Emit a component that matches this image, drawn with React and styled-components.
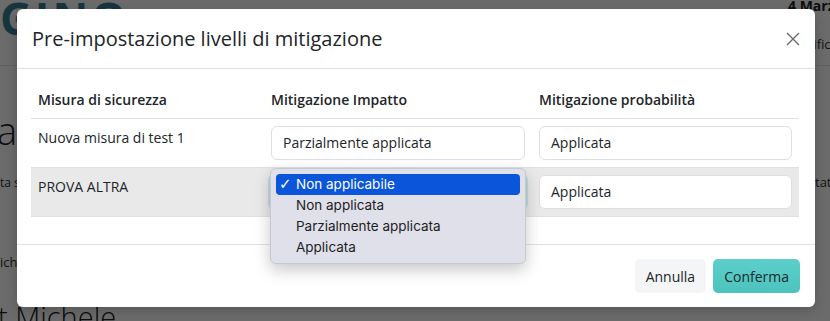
import React from 'react';
import styled, { createGlobalStyle } from 'styled-components';

const GlobalStyle = createGlobalStyle`
  html, body {
    margin: 0;
    padding: 0;
    overflow: hidden;
    background: #ffffff;
  }
  * {
    box-sizing: border-box;
  }
`;

// Pagina sotto la modale
const Screen = styled.div`
  position: relative;
  width: 830px;
  height: 321px;
  overflow: hidden;
  font-family: 'Open Sans', sans-serif;
  color: #222;
`;

const TopBar = styled.header`
  display: flex;
  justify-content: space-between;
  height: 66px;
  border-bottom: 1px solid #e4e4e4;
`;

const Logo = styled.div`
  font-size: 44px;
  font-weight: 700;
  line-height: 1;
  letter-spacing: 3px;
  color: #3b8296;
  margin-top: -4px;
`;

const DateBox = styled.div`
  width: 42px;
  overflow: hidden;
  white-space: nowrap;
`;

const DateText = styled.div`
  font-size: 14px;
  font-weight: 700;
  line-height: 16px;
  margin-top: -2px;
`;

const DateSub = styled.div`
  font-size: 13px;
  line-height: 18px;
  margin-top: 21px;
  margin-left: 5px;
  color: #333;
`;

const PageBody = styled.main`
  display: flex;
  justify-content: space-between;
`;

const LeftGutter = styled.div`
  display: flex;
  flex-direction: column;
  width: 17px;
  white-space: nowrap;
`;

const RightGutter = styled.div`
  width: 15px;
  overflow: hidden;
  white-space: nowrap;
`;

const BigWord = styled.div`
  font-size: 38px;
  font-weight: 300;
  line-height: 44px;
  margin-top: 42px;
  margin-left: -3px;
`;

const SmallLine = styled.div`
  font-size: ${(p) => p.$size || 12}px;
  line-height: 18px;
  margin-top: ${(p) => p.$top || 0}px;
  color: #333;
`;

const BigName = styled.div`
  font-size: 29px;
  font-weight: 300;
  line-height: 40px;
  margin-top: 26px;
  margin-left: -2px;
`;

const Overlay = styled.div`
  position: absolute;
  inset: 0;
  background: rgba(0, 0, 0, 0.58);
`;

// Modale
const Modal = styled.div`
  position: absolute;
  left: 17px;
  top: 9px;
  width: 798px;
  background: #ffffff;
  border-radius: 6px;
  box-shadow: 0 3px 12px rgba(0, 0, 0, 0.2);
  font-family: 'Open Sans', sans-serif;
  color: #212529;
`;

const ModalHeader = styled.div`
  display: flex;
  align-items: center;
  justify-content: space-between;
  padding: 15px 15px 14px;
  border-bottom: 1px solid #dee2e6;
`;

const ModalTitle = styled.h5`
  margin: 0;
  font-size: 20px;
  font-weight: 400;
  line-height: 30px;
`;

const CloseButton = styled.button`
  display: flex;
  width: 14px;
  height: 14px;
  padding: 0;
  border: none;
  background: transparent;
  cursor: pointer;
`;

const ModalBody = styled.div`
  padding: 13px 16px 27px 14px;
`;

const Table = styled.table`
  width: 100%;
  border-collapse: collapse;
  table-layout: fixed;
  font-size: 14px;
  line-height: 24px;
`;

const Th = styled.th`
  width: ${(p) => p.$w}px;
  padding: 6px 7px;
  text-align: left;
  font-weight: 600;
  border-bottom: 1px solid #dee2e6;
`;

const Tr = styled.tr`
  background: ${(p) => (p.$shaded ? '#e9e9e9' : 'transparent')};
`;

const Td = styled.td`
  position: relative;
  padding: 7px;
  vertical-align: top;
  border-top: 1px solid #dee2e6;
  border-bottom: 1px solid #dee2e6;
`;

const Field = styled.div`
  display: flex;
  align-items: center;
  height: 34px;
  padding: 0 11px;
  background: #ffffff;
  border: 1px solid ${(p) => (p.$focused ? '#86d5d0' : '#dcdfe4')};
  border-radius: 6px;
  box-shadow: ${(p) => (p.$focused ? '0 0 0 3px rgba(86, 200, 196, 0.3)' : 'none')};
  font-size: 14px;
  white-space: nowrap;
`;

const Menu = styled.ul`
  position: absolute;
  top: 0;
  left: 6px;
  width: 256px;
  margin: 0;
  padding: 5px;
  list-style: none;
  background: #dfe0e9;
  border: 1px solid #c7c9d1;
  border-radius: 6px;
  box-shadow: 0 6px 16px rgba(0, 0, 0, 0.22);
  font-family: Inter, 'Liberation Sans', sans-serif;
  font-size: 13.5px;
  z-index: 2;
`;

const MenuItem = styled.li`
  position: relative;
  height: 21px;
  line-height: 21px;
  padding-left: 20px;
  border-radius: 4px;
  color: ${(p) => (p.$active ? '#ffffff' : '#1d1d1f')};
  background: ${(p) => (p.$active ? '#0a55d9' : 'transparent')};
`;

const Check = styled.span`
  position: absolute;
  left: 3px;
  top: 0;
  font-family: 'DejaVu Sans', sans-serif;
  font-size: 15px;
  font-weight: 700;
`;

const ModalFooter = styled.div`
  display: flex;
  justify-content: flex-end;
  gap: 7px;
  padding: 14px 15px;
  border-top: 1px solid #dee2e6;
`;

const Button = styled.button`
  height: 34px;
  padding: 0 11px;
  border: none;
  border-radius: 5px;
  font-family: 'Open Sans', sans-serif;
  font-size: 14px;
  color: ${(p) => (p.$primary ? '#1b2a2a' : '#212529')};
  background: ${(p) => (p.$primary ? 'linear-gradient(#5dcfca, #4dc3be)' : '#f4f5f7')};
  cursor: pointer;
`;

const opzioni = ['Non applicabile', 'Non applicata', 'Parzialmente applicata', 'Applicata'];

const misure = [
  { id: 1, nome: 'Nuova misura di test 1', impatto: 'Parzialmente applicata', probabilita: 'Applicata' },
  { id: 2, nome: 'PROVA ALTRA', impatto: 'Non applicabile', probabilita: 'Applicata', aperto: true },
];

function App() {
  return (
    <Screen>
      <GlobalStyle />
      <TopBar>
        <Logo>GINO</Logo>
        <DateBox>
          <DateText>4 Marzo</DateText>
          <DateSub>Verifica</DateSub>
        </DateBox>
      </TopBar>
      <PageBody>
        <LeftGutter>
          <BigWord>a</BigWord>
          <SmallLine $top={22}>ta sicura</SmallLine>
          <SmallLine $top={61} $size={13}>ich</SmallLine>
          <BigName>t Michele</BigName>
        </LeftGutter>
        <RightGutter>
          <SmallLine $top={107} $size={13}>tato</SmallLine>
        </RightGutter>
      </PageBody>
      <Overlay />

      <Modal>
        <ModalHeader>
          <ModalTitle>Pre-impostazione livelli di mitigazione</ModalTitle>
          <CloseButton aria-label="Chiudi">
            <svg width="14" height="14" viewBox="0 0 14 14">
              <path d="M1 1 L13 13 M13 1 L1 13" stroke="#6b6b6b" strokeWidth="1.4" fill="none" />
            </svg>
          </CloseButton>
        </ModalHeader>

        <ModalBody>
          <Table>
            <thead>
              <tr>
                <Th $w={233}>Misura di sicurezza</Th>
                <Th $w={268}>Mitigazione Impatto</Th>
                <Th $w={267}>Mitigazione probabilità</Th>
              </tr>
            </thead>
            <tbody>
              {misure.map((m) => (
                <Tr key={m.id} $shaded={m.aperto}>
                  <Td>{m.nome}</Td>
                  <Td>
                    <Field $focused={m.aperto}>{m.impatto}</Field>
                    {m.aperto && (
                      <Menu>
                        {opzioni.map((o) => (
                          <MenuItem key={o} $active={o === m.impatto}>
                            {o === m.impatto && <Check>✓</Check>}
                            {o}
                          </MenuItem>
                        ))}
                      </Menu>
                    )}
                  </Td>
                  <Td>
                    <Field>{m.probabilita}</Field>
                  </Td>
                </Tr>
              ))}
            </tbody>
          </Table>
        </ModalBody>

        <ModalFooter>
          <Button>Annulla</Button>
          <Button $primary>Conferma</Button>
        </ModalFooter>
      </Modal>
    </Screen>
  );
}

export default App;
